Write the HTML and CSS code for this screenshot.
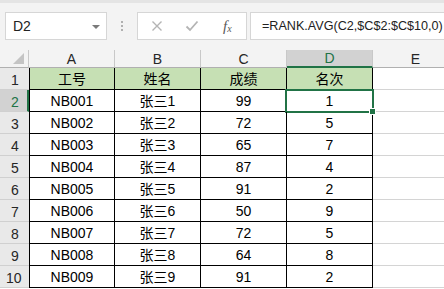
FILE: index.html
```html
<!DOCTYPE html>
<html lang="zh-CN">
<head>
<meta charset="utf-8">
<title>RANK.AVG</title>
<link rel="stylesheet" href="styles.css">
</head>
<body>
<div class="app">
  <div class="toolbar">
    <div class="namebox">
      <span class="name">D2</span>
      <svg class="drop" width="8" height="4" viewBox="0 0 8 4"><path d="M0 0H8L4 4Z" fill="#7a7a7a"/></svg>
    </div>
    <div class="dots"><i></i><i></i><i></i></div>
    <div class="fxbox">
      <svg class="ico" width="12" height="12" viewBox="0 0 12 12"><path d="M1.5 1.5L10.5 10.5M10.5 1.5L1.5 10.5" stroke="#b4b4b4" stroke-width="1.4" fill="none"/></svg>
      <svg class="ico" width="14" height="12" viewBox="0 0 14 12"><path d="M1.5 6.5L5 10L12.5 1.5" stroke="#b4b4b4" stroke-width="1.8" fill="none"/></svg>
      <span class="fx">f<sub>x</sub></span>
    </div>
    <div class="formula">=RANK.AVG(C2,$C$2:$C$10,0)</div>
  </div>
  <div class="sheet">
    <div class="corner"><span class="tri"></span></div>
    <div class="ch">A</div><div class="ch">B</div><div class="ch">C</div><div class="ch sel">D</div><div class="ch">E</div>

    <div class="rh">1</div>
    <div class="c hd first">工号</div><div class="c hd">姓名</div><div class="c hd">成绩</div><div class="c hd">名次</div><div class="e"></div>

    <div class="rh sel">2</div>
    <div class="c first">NB001</div><div class="c">张三1</div><div class="c">99</div><div class="c active">1<span class="handle"></span></div><div class="e"></div>

    <div class="rh">3</div>
    <div class="c first">NB002</div><div class="c">张三2</div><div class="c">72</div><div class="c">5</div><div class="e"></div>

    <div class="rh">4</div>
    <div class="c first">NB003</div><div class="c">张三3</div><div class="c">65</div><div class="c">7</div><div class="e"></div>

    <div class="rh">5</div>
    <div class="c first">NB004</div><div class="c">张三4</div><div class="c">87</div><div class="c">4</div><div class="e"></div>

    <div class="rh">6</div>
    <div class="c first">NB005</div><div class="c">张三5</div><div class="c">91</div><div class="c">2</div><div class="e"></div>

    <div class="rh">7</div>
    <div class="c first">NB006</div><div class="c">张三6</div><div class="c">50</div><div class="c">9</div><div class="e"></div>

    <div class="rh">8</div>
    <div class="c first">NB007</div><div class="c">张三7</div><div class="c">72</div><div class="c">5</div><div class="e"></div>

    <div class="rh">9</div>
    <div class="c first">NB008</div><div class="c">张三8</div><div class="c">64</div><div class="c">8</div><div class="e"></div>

    <div class="rh">10</div>
    <div class="c first">NB009</div><div class="c">张三9</div><div class="c">91</div><div class="c">2</div><div class="e"></div>
  </div>
</div>
</body>
</html>
```

FILE: styles.css
```css
html, body {
  margin: 0;
  padding: 0;
  overflow: hidden;
  background: #ffffff;
}
.app {
  width: 444px;
  height: 289px;
  overflow: hidden;
  font-family: "Liberation Sans", "Noto Sans CJK SC", sans-serif;
}
.toolbar {
  height: 50px;
  box-sizing: border-box;
  background: #f3f3f3;
  border-top: 3px solid #e4e4e4;
  padding-top: 9px;
  display: flex;
  align-items: flex-start;
}
.toolbar > * {
  flex-shrink: 0;
}
.namebox {
  margin-left: 5px;
  width: 102px;
  height: 28px;
  box-sizing: border-box;
  background: #fff;
  border: 1px solid #d6d6d6;
  display: flex;
  align-items: center;
  justify-content: space-between;
  padding: 0 6px 0 7px;
}
.name {
  font-size: 14px;
  color: #222;
}
.drop {
  display: block;
  margin-top: 1px;
}
.dots {
  width: 30px;
  height: 28px;
  display: flex;
  flex-direction: column;
  align-items: center;
  justify-content: center;
  gap: 2px;
}
.dots i {
  display: block;
  width: 2px;
  height: 2px;
  background: #b0b0b0;
}
.fxbox {
  width: 110px;
  height: 28px;
  box-sizing: border-box;
  background: #fff;
  border: 1px solid #d6d6d6;
  display: flex;
  align-items: center;
  padding-left: 13px;
}
.fxbox .ico {
  display: block;
}
.fxbox .ico:first-child {
  margin-right: 22px;
}
.fx {
  margin-left: 24px;
  font-family: "Liberation Serif", serif;
  font-style: italic;
  font-size: 15px;
  color: #5a5a5a;
  line-height: 1;
}
.fx sub {
  font-size: 10px;
  vertical-align: baseline;
  position: relative;
  top: 1px;
}
.formula {
  flex: 1 1 auto;
  min-width: 0;
  overflow: hidden;
  margin-left: 3px;
  height: 28px;
  box-sizing: border-box;
  background: #fff;
  border: 1px solid #d6d6d6;
  border-right: none;
  padding-left: 11px;
  font-size: 12.6px;
  line-height: 26px;
  color: #222;
  white-space: nowrap;
}
.sheet {
  display: grid;
  grid-template-columns: 29px 86px 86px 86px 86px 86px;
  grid-template-rows: 18px repeat(10, 22px);
  background: #fff;
}
.corner {
  background: #f3f3f3;
  border-right: 1px solid #c8c8c8;
  border-bottom: 1px solid #b0b0b0;
  box-sizing: border-box;
  position: relative;
}
.tri {
  position: absolute;
  right: 4px;
  bottom: 3px;
  width: 0;
  height: 0;
  border-left: 11px solid transparent;
  border-bottom: 11px solid #c4c4c4;
}
.ch {
  background: #f3f3f3;
  border-right: 1px solid #c8c8c8;
  border-bottom: 1px solid #b0b0b0;
  box-sizing: border-box;
  text-align: center;
  font-size: 14px;
  line-height: 18px;
  color: #262626;
}
.ch.sel {
  background: #d2d2d2;
  color: #217346;
  border-bottom: 2px solid #217346;
  line-height: 17px;
}
.rh {
  background: #e9e9e9;
  border-bottom: 1px solid #d0d0d0;
  box-sizing: border-box;
  font-size: 14px;
  line-height: 24px;
  padding-left: 11px;
  color: #262626;
}
.rh:nth-last-child(6) {
  padding-left: 6px;
}
.rh.sel {
  background: #d2d2d2;
  color: #217346;
  border-right: 2px solid #217346;
}
.c {
  border-right: 1px solid #000;
  border-bottom: 1px solid #000;
  box-sizing: border-box;
  text-align: center;
  font-size: 14px;
  line-height: 22px;
  color: #000;
  position: relative;
}
.c.first {
  border-left: 1px solid #000;
}
.c.hd {
  background: #c6e0b4;
}
.e {
  border-bottom: 1px solid #d4d4d4;
  box-sizing: border-box;
}
.active::after {
  content: "";
  position: absolute;
  left: -2px;
  top: -1px;
  right: -2px;
  bottom: -2px;
  border: 2px solid #217346;
  pointer-events: none;
}
.handle {
  position: absolute;
  right: -4px;
  bottom: -4px;
  width: 5px;
  height: 5px;
  background: #217346;
  border: 1px solid #fff;
  z-index: 2;
}
```
